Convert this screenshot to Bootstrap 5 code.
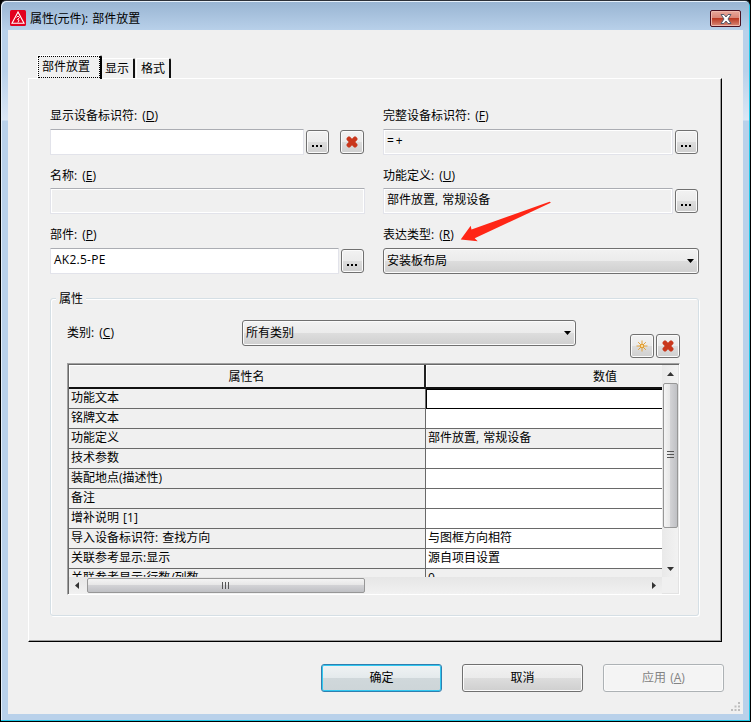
<!DOCTYPE html>
<html lang="zh-CN">
<head>
<meta charset="utf-8">
<meta name="viewport" content="width=device-width, initial-scale=1">
<title>属性(元件): 部件放置</title>
<link href="https://cdn.jsdelivr.net/npm/bootstrap@5.3.0/dist/css/bootstrap.min.css" rel="stylesheet">
<style>
body{margin:0;overflow:hidden;background:#000;color:#000;font:12px/16px "Open Sans","Noto Sans CJK SC",sans-serif;word-spacing:1px}
.win{width:751px;height:722px;border:1px solid #000;border-top-color:#2c3038;border-radius:6px 6px 0 0;background:linear-gradient(#98b4d2,#b9d1ea 30px,#b9d1ea 70px,#dbe7f5 119px,#b9d1ea 120px);box-shadow:inset -1px -1px #20c8e8,inset 1px 1px #e6f0fa;padding:0 7px 7px}
.titlebar{height:29px;padding-top:9px}
.titlebar .cap{margin:1px 0 0 4px;word-spacing:1px}
.closebtn{width:31px;height:17px;margin-right:2px;border:1px solid #4a1020;border-radius:2px;background:linear-gradient(#e9a99c,#d98476 48%,#bb3a24 50%,#c9604c 75%,#d98a78);box-shadow:inset 0 0 0 1px #efb9ae}
.client{position:relative;height:684px;background:#f0f0f0;padding:24px 21px 0 20px}
.tabs{height:24px;padding-left:9px}
.tab1{width:65px;height:24px;border-right:2px solid #000;border-left:1px solid #fff;border-top:1px solid #fff;border-radius:2px 2px 0 0;margin-bottom:-1px;background:#f0f0f0;z-index:1;position:relative}
.tab1 span{display:block;width:62px;height:22px;border:1px dotted #000;padding:2px 0 0 3px}
.tabn{height:20px;border-right:2px solid #111;border-top:1px solid #fff;border-radius:0 2px 0 0;padding:2px 0 0 3px;width:33px}
.tabn.t3{width:35px;border-left:1px solid #fff;padding-left:4px;margin-left:1px}
.pane{height:564px;border-style:solid;border-width:1px;border-color:#fff #000 #000 #fff;box-shadow:inset -1px -1px #a0a0a0;padding:28px 22px 0 21px}
.fields{display:grid;grid-template-columns:315px 316px;column-gap:18px;height:178px;grid-template-rows:59px 60px 59px}
.lbl{height:16px;line-height:18px;margin-bottom:6px;white-space:nowrap;word-spacing:2px}
.r2 .lbl{margin:1px 0 5px}
.fld{height:26px;flex:1;border:1px solid #e2e3ea;border-top-color:#abadb3;border-radius:1px;box-shadow:inset 0 0 0 1px #fff;padding:3px 3px 0;background:#f0f0f0}
.fld.edit{background:#fff}
.fld .latin{letter-spacing:.25px}
.wbtn{border:1px solid #707070;border-radius:3px;background:linear-gradient(#f2f2f2,#ebebeb 49%,#dddddd 50%,#cfcfcf);box-shadow:inset 0 0 0 1px #fbfbfb;padding:0;display:flex;align-items:center;justify-content:center;color:#000;font-size:12px;line-height:16px}
.sq{width:23px;height:24px;margin:1px 1px 0 2px;flex:none}
.sq.more{padding:7px 1px 0 0}
.sq.x{width:24px}
.sq.clear{margin-left:10px}
.sq.tool{margin:15px 2px 0 0}
.dd{height:26px;justify-content:space-between;padding:0 4px 0 3px;text-align:left}
.dd.cat{width:334px;margin:1px 54px 0 0}
.catlbl{width:175px;padding-top:6px;word-spacing:2px}
.group{position:relative;height:318px;margin:13px 0 0;border:1px solid #d5dfe5;border-radius:3px;box-shadow:inset 1px 1px #fff,1px 1px #fff;padding:20px 0 0 16px}
.legendt{position:absolute;left:5px;top:-9px;background:#f0f0f0;padding:0 3px;line-height:18px}
.toolrow{height:44px}
.gridbox{width:613px;height:232px;border:1px solid #a0a0a0;border-right-color:#fff;border-bottom-color:#fff;box-shadow:inset 1px 1px #696969,inset -1px -1px #e3e3e3;padding:1px;display:grid;grid-template:212px 17px/593px 16px}
.view{overflow:hidden}
.props{width:717px;table-layout:fixed;border-collapse:separate;border-spacing:0}
.props th{height:24px;padding:1px 0 0;font-weight:400;text-align:center;border-bottom:2px solid #111;border-right:2px solid #222;box-shadow:inset 1px 1px #fff}
.props td{height:20px;padding:0 2px;line-height:17px;border-bottom:1px solid #696969;border-right:1px solid #696969;white-space:nowrap;vertical-align:top}
.props td.ed{background:#fff}
.props td.foc{box-shadow:inset 1px 1px #000;border-bottom-color:#000}
.vs{background:linear-gradient(90deg,#e9e9e9,#f2f2f2);display:flex;flex-direction:column;align-items:center}
.vthumb{width:15px;height:145px;margin:7px 0 auto;border:1px solid #979797;border-radius:2px;background:linear-gradient(90deg,#f4f4f4,#e6e6e6 48%,#d2d2d5 50%,#bfc0c4);display:flex;align-items:center;justify-content:center}
.vs .up{margin-top:7px}
.vs .dn{margin-bottom:6px}
.hs{background:linear-gradient(#e6e6e6,#f1f1f1);display:flex;align-items:center;padding:0 6px}
.hthumb{width:278px;height:15px;margin:0 auto 0 8px;padding-right:1px;border:1px solid #979797;border-radius:2px;background:linear-gradient(#f4f4f4,#e6e6e6 48%,#d2d2d5 50%,#bfc0c4);display:flex;align-items:center;justify-content:center}
.foot{padding:22px 0 0;margin-right:-2px;gap:20px}
.act{width:121px;height:28px}
.act.ok{border-color:#2f7fb0;box-shadow:inset 0 0 0 1px #32c8f0;background:linear-gradient(#f0f3f4,#e4eaec 49%,#d0d8db 50%,#cdd5d8)}
.act.off{border-color:#adb2b5;color:#838383;background:#f4f4f4}
.grip{position:absolute;right:3px;bottom:3px}
.pointer{position:absolute;left:450px;top:168px;pointer-events:none}
svg{display:block}
</style>
<script src="https://cdn.jsdelivr.net/npm/bootstrap@5.3.0/dist/js/bootstrap.bundle.min.js"></script>
</head>
<body>
<svg width="0" height="0" class="position-absolute">
<symbol id="del" viewBox="0.5 0.5 11 11"><path d="M1 2.500 2.500 1H4l2 2 2-2h1.500L11 2.500V4L9 6l2 2v1.500L9.500 11H8L6 9l-2 2H2.500L1 9.500V8l2-2-2-2z" fill="#c9371c"/></symbol>
<symbol id="dots" viewBox="0 0 10 2"><path d="M0 0h2v2H0zM4 0h2v2H4zM8 0h2v2H8z"/></symbol>
<symbol id="down" viewBox="0 0 7 4"><path d="M0 0h7L3.500 4z"/></symbol>
</svg>
<div class="win">
  <div class="titlebar d-flex justify-content-between">
    <div class="d-flex">
      <svg width="18" height="16" viewBox="0 0 18 16"><rect x="2" width="16" height="16" rx="1.500" fill="#e2001f"/><path d="M10 2 4 13.300h12z" fill="none" stroke="#fff" stroke-width="1.100"/><path d="M8.500 7.500 10 6l1.500 1.500L9.500 9.500l1.500.5-1 2.500" fill="none" stroke="#fff" stroke-width=".9"/></svg>
      <span class="cap">属性(元件): 部件放置</span>
    </div>
    <div class="closebtn d-flex align-items-center justify-content-center"><svg width="12" height="10" viewBox="0 0 12 10"><path d="M1 .5h3L6 3 8 .5h3L8 5l3 4.500H8L6 7 4 9.500H1L4 5z" fill="#fff" stroke="#555b6b"/></svg></div>
  </div>
  <div class="client">
    <div class="tabs d-flex align-items-end">
      <div class="tab1"><span>部件放置</span></div>
      <div class="tabn">显示</div>
      <div class="tabn t3">格式</div>
    </div>
    <div class="pane">
      <div class="fields">
        <div>
          <div class="lbl">显示设备标识符: (<u>D</u>)</div>
          <div class="d-flex"><div class="fld edit"></div><div class="wbtn sq more"><svg width="10" height="2"><use href="#dots"/></svg></div><div class="wbtn sq x clear"><svg width="12" height="12"><use href="#del"/></svg></div></div>
        </div>
        <div>
          <div class="lbl">完整设备标识符: (<u>F</u>)</div>
          <div class="d-flex"><div class="fld">=&thinsp;+</div><div class="wbtn sq more"><svg width="10" height="2"><use href="#dots"/></svg></div></div>
        </div>
        <div class="r2">
          <div class="lbl">名称: (<u>E</u>)</div>
          <div class="d-flex"><div class="fld"></div></div>
        </div>
        <div class="r2">
          <div class="lbl">功能定义: (<u>U</u>)</div>
          <div class="d-flex"><div class="fld">部件放置, 常规设备</div><div class="wbtn sq more"><svg width="10" height="2"><use href="#dots"/></svg></div></div>
        </div>
        <div>
          <div class="lbl">部件: (<u>P</u>)</div>
          <div class="d-flex"><div class="fld edit"><span class="latin">AK2.5-PE</span></div><div class="wbtn sq more"><svg width="10" height="2"><use href="#dots"/></svg></div></div>
        </div>
        <div>
          <div class="lbl">表达类型: (<u>R</u>)</div>
          <div class="wbtn dd"><span>安装板布局</span><svg width="7" height="4"><use href="#down"/></svg></div>
        </div>
      </div>
      <div class="group">
        <div class="legendt">属性</div>
        <div class="toolrow d-flex align-items-start">
          <div class="catlbl">类别: (<u>C</u>)</div>
          <div class="wbtn dd cat"><span>所有类别</span><svg width="7" height="4"><use href="#down"/></svg></div>
          <div class="wbtn sq x tool"><svg width="12" height="12" viewBox="0 0 12 12"><path d="M6 .5v11M.5 6h11M2.200 2.200l7.600 7.600M9.800 2.200 2.200 9.800" stroke="#e2a038"/><circle cx="6" cy="6" r="2.300" fill="#e2a038"/><circle cx="6" cy="6" r="1" fill="#fff3c8"/></svg></div>
          <div class="wbtn sq x tool"><svg width="12" height="12"><use href="#del"/></svg></div>
        </div>
        <div class="gridbox">
          <div class="view">
            <table class="props">
              <colgroup><col style="width:357px"><col style="width:360px"></colgroup>
              <thead><tr><th>属性名</th><th>数值</th></tr></thead>
              <tbody>
                <tr><td>功能文本</td><td class="ed foc"></td></tr>
                <tr><td>铭牌文本</td><td class="ed"></td></tr>
                <tr><td>功能定义</td><td>部件放置, 常规设备</td></tr>
                <tr><td>技术参数</td><td class="ed"></td></tr>
                <tr><td>装配地点(描述性)</td><td class="ed"></td></tr>
                <tr><td>备注</td><td class="ed"></td></tr>
                <tr><td>增补说明 [1]</td><td class="ed"></td></tr>
                <tr><td>导入设备标识符: 查找方向</td><td class="ed">与图框方向相符</td></tr>
                <tr><td>关联参考显示:显示</td><td class="ed">源自项目设置</td></tr>
                <tr><td>关联参考显示:行数/列数</td><td>0</td></tr>
              </tbody>
            </table>
          </div>
          <div class="vs">
            <svg class="up" width="7" height="4" viewBox="0 0 7 4"><path d="M0 4h7L3.500 0z" fill="#333"/></svg>
            <div class="vthumb"><svg width="7" height="9" viewBox="0 0 7 9"><path d="M0 .5h7M0 3.500h7M0 6.500h7" stroke="#555"/></svg></div>
            <svg class="dn" width="7" height="4" viewBox="0 0 7 4"><path d="M0 0h7L3.500 4z" fill="#333"/></svg>
          </div>
          <div class="hs">
            <svg width="4" height="7" viewBox="0 0 4 7"><path d="M4 0v7L0 3.500z" fill="#333"/></svg>
            <div class="hthumb"><svg width="9" height="7" viewBox="0 0 9 7"><path d="M1.500 0v7M4.500 0v7M7.500 0v7" stroke="#555"/></svg></div>
            <svg width="4" height="7" viewBox="0 0 4 7"><path d="M0 0v7l4-3.500z" fill="#333"/></svg>
          </div>
          <div></div>
        </div>
      </div>
    </div>
    <div class="foot d-flex justify-content-end">
      <div class="wbtn act ok"><span>确定</span></div>
      <div class="wbtn act"><span>取消</span></div>
      <div class="wbtn act off"><span>应用 (<u>A</u>)</span></div>
    </div>
    <svg class="pointer" width="96" height="48" viewBox="458 198 96 48"><path d="M460.700 239.600 470.700 225.700 471.500 229.400 549.500 201.700Q551.500 201.900 550.200 203L474.700 238.300 477.700 241.300z" fill="#ff2616"/></svg>
    <svg class="grip" width="9" height="9" viewBox="0 0 9 9"><path d="M7 0h2v2H7zM3.500 3.500h2v2h-2zM7 3.500h2v2H7zM0 7h2v2H0zM3.500 7h2v2h-2zM7 7h2v2H7z" fill="#bdbdbd"/></svg>
  </div>
</div>
</body>
</html>
